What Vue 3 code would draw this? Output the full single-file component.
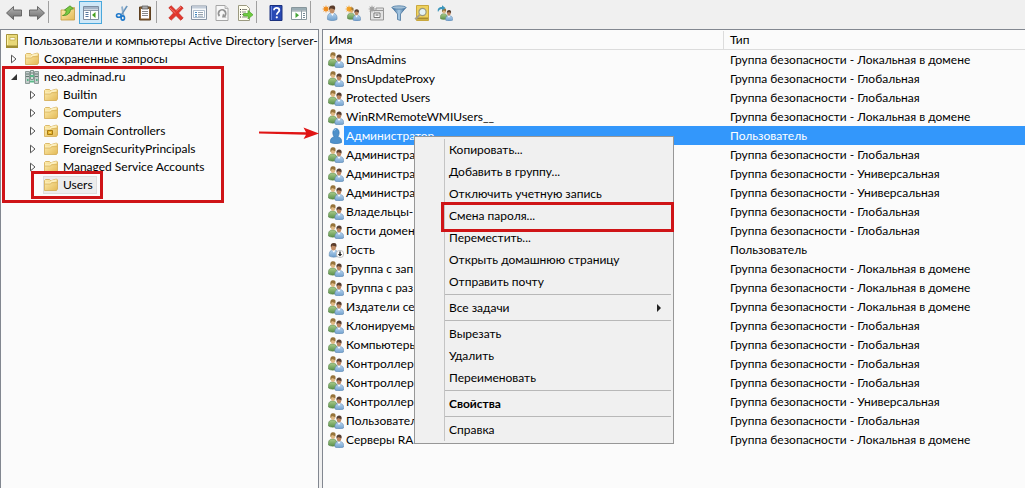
<script setup>
const toolbar = [
  [{ icon: 'back', label: 'Назад' }, { icon: 'forward', label: 'Вперед' }],
  [{ icon: 'up', label: 'Вверх' }, { icon: 'tree', label: 'Дерево консоли', active: true }],
  [{ icon: 'cut', label: 'Вырезать' }, { icon: 'paste', label: 'Вставить' }],
  [
    { icon: 'delete', label: 'Удалить' },
    { icon: 'props', label: 'Свойства' },
    { icon: 'refresh', label: 'Обновить' },
    { icon: 'export', label: 'Экспорт списка' }
  ],
  [{ icon: 'help', label: 'Справка' }, { icon: 'pane', label: 'Панель действий' }],
  [
    { icon: 'newuser', label: 'Создать пользователя' },
    { icon: 'newgroup', label: 'Создать группу' },
    { icon: 'newou', label: 'Создать подразделение' },
    { icon: 'filter', label: 'Фильтр' },
    { icon: 'find', label: 'Поиск' },
    { icon: 'addgroup', label: 'Добавить в группу' }
  ]
]

const tree = [
  { level: 0, icon: 'book', text: 'Пользователи и компьютеры Active Directory [server-' },
  { level: 1, icon: 'folder', text: 'Сохраненные запросы', arrow: 'closed' },
  { level: 1, icon: 'domain', text: 'neo.adminad.ru', arrow: 'open' },
  { level: 2, icon: 'folder', text: 'Builtin', arrow: 'closed' },
  { level: 2, icon: 'folder', text: 'Computers', arrow: 'closed' },
  { level: 2, icon: 'oufolder', text: 'Domain Controllers', arrow: 'closed' },
  { level: 2, icon: 'folder', text: 'ForeignSecurityPrincipals', arrow: 'closed' },
  { level: 2, icon: 'folder', text: 'Managed Service Accounts', arrow: 'closed' },
  { level: 2, icon: 'folder', text: 'Users', selected: true }
]

const L = 'Группа безопасности - Локальная в домене'
const G = 'Группа безопасности - Глобальная'
const U = 'Группа безопасности - Универсальная'
const P = 'Пользователь'
const rows = [
  { name: 'DnsAdmins', type: L },
  { name: 'DnsUpdateProxy', type: G },
  { name: 'Protected Users', type: G },
  { name: 'WinRMRemoteWMIUsers__', type: L },
  { name: 'Администратор', type: P, icon: 'user', selected: true },
  { name: 'Администра', type: G },
  { name: 'Администра', type: U },
  { name: 'Администра', type: U },
  { name: 'Владельцы-', type: G },
  { name: 'Гости домен', type: G },
  { name: 'Гость', type: P, icon: 'guest' },
  { name: 'Группа с зап', type: L },
  { name: 'Группа с раз', type: L },
  { name: 'Издатели сер', type: L },
  { name: 'Клонируемы', type: G },
  { name: 'Компьютеры', type: G },
  { name: 'Контроллер', type: G },
  { name: 'Контроллер', type: G },
  { name: 'Контроллер', type: U },
  { name: 'Пользовател', type: G },
  { name: 'Серверы RA', type: L }
]

const menu = [
  [
    { text: 'Копировать...' },
    { text: 'Добавить в группу...' },
    { text: 'Отключить учетную запись' },
    { text: 'Смена пароля...', marked: true },
    { text: 'Переместить...' },
    { text: 'Открыть домашнюю страницу' },
    { text: 'Отправить почту' }
  ],
  [{ text: 'Все задачи', submenu: true }],
  [{ text: 'Вырезать' }, { text: 'Удалить' }, { text: 'Переименовать' }],
  [{ text: 'Свойства', bold: true }],
  [{ text: 'Справка' }]
]
</script>

<template>
  <div class="window">
    <svg class="sprite" aria-hidden="true">
      <defs>
        <linearGradient id="g-arrow" x1="0" y1="0" x2="0" y2="1">
          <stop offset="0" stop-color="#b5b5b5" /><stop offset="1" stop-color="#6c6c6c" />
        </linearGradient>
        <linearGradient id="g-folder" x1="0" y1="0" x2="1" y2="1">
          <stop offset="0" stop-color="#fff0b4" /><stop offset="1" stop-color="#e3b955" />
        </linearGradient>
        <linearGradient id="g-blue" x1="0" y1="0" x2="0" y2="1">
          <stop offset="0" stop-color="#b5d3ee" /><stop offset="1" stop-color="#6f9fcd" />
        </linearGradient>
        <linearGradient id="g-green" x1="0" y1="0" x2="0" y2="1">
          <stop offset="0" stop-color="#a9cc8e" /><stop offset="1" stop-color="#5c9149" />
        </linearGradient>
        <linearGradient id="g-filter" x1="0" y1="0" x2="1" y2="0">
          <stop offset="0" stop-color="#2f5f8e" /><stop offset=".5" stop-color="#a9cbe6" /><stop offset="1" stop-color="#2e5d8b" />
        </linearGradient>
      </defs>
      <symbol id="back" viewBox="0 0 16 16">
        <path d="M.5 8 7.500 1.500V5h8v6h-8v3.500z" fill="url(#g-arrow)" stroke="#5f5f5f" stroke-width=".9" stroke-linejoin="round" />
      </symbol>
      <symbol id="forward" viewBox="0 0 16 16">
        <path d="M15.500 8 8.500 1.500V5h-8v6h8v3.500z" fill="url(#g-arrow)" stroke="#5f5f5f" stroke-width=".9" stroke-linejoin="round" />
      </symbol>
      <symbol id="folder" viewBox="0 0 16 16">
        <path d="M1.500 3.500 2.500 2.500h4l1 1h1l5-1.500 1 1v9l-1 1.500h-12z" fill="url(#g-folder)" stroke="#d3ab50" stroke-width=".8" />
        <path d="M8 3.500 13.500 2.300v2l-5 1.200-1 1.500H2V5.500h5z" fill="#fff6cf" opacity=".8" />
        <path d="M2 7h5.500l1-1.300H14" stroke="#d7b158" stroke-width=".8" fill="none" />
      </symbol>
      <symbol id="oufolder" viewBox="0 0 16 16">
        <use href="#folder" width="16" height="16" />
        <path d="M4.500 7.500h5v4h-5z" fill="#e8b42c" stroke="#a87a10" />
        <path d="M6 9h2v1H6z" fill="#f8dc7c" />
      </symbol>
      <symbol id="up" viewBox="0 0 16 16">
        <path d="M1 5h5l1-1.500 7.500-1V15H1z" fill="url(#g-folder)" stroke="#c59a3d" stroke-width=".8" />
        <path d="M2.500 10.500C6 9.500 6 7 6.200 5.500L4.500 5 10 .8 13.500 3.800 10.500 4.500C10.300 8 7.500 11 2.500 10.500z" fill="#79c842" stroke="#3f8a20" stroke-width=".7" />
      </symbol>
      <symbol id="tree" viewBox="0 0 16 16">
        <path d="M.5 1.500h15v13H.5z" fill="#fff" stroke="#7c8ca0" />
        <path d="M1 2h14v2.500H1z" fill="#a3b3c6" />
        <path d="M1 5.500h14M7.500 5v9" stroke="#8b99aa" />
        <path d="M2.500 7.500h3M2.500 9.500h3M2.500 11.500h3" stroke="#54779f" />
        <path d="M12.500 7v6L9 10z" fill="#45a01f" />
      </symbol>
      <symbol id="cut" viewBox="0 0 16 16">
        <path d="M13 1 7 10.500M8 1.500 9.500 11" stroke="#8fb0ce" stroke-width="1.800" fill="none" />
        <path d="M13.200 1 8 9" stroke="#4d80af" stroke-width=".8" />
        <ellipse cx="4.800" cy="10.500" rx="2.300" ry="1.800" fill="none" stroke="#1f79cb" stroke-width="1.600" />
        <ellipse cx="8.800" cy="13" rx="1.700" ry="2.100" fill="none" stroke="#1f79cb" stroke-width="1.600" />
      </symbol>
      <symbol id="paste" viewBox="0 0 16 16">
        <path d="M2.500 2h11v13h-11z" fill="#8a6030" stroke="#5e4020" />
        <path d="M4 4h8v9.500H4z" fill="#fff" />
        <path d="M5 1h6v3H5z" fill="#aaa" stroke="#555" stroke-width=".7" />
        <path d="M5 6.500h6M5 8.500h6M5 10.500h6" stroke="#8a8a8a" />
      </symbol>
      <symbol id="delete" viewBox="0 0 16 16">
        <path d="M.8 2.800 3.200.8 8 5.500 12.800.9 15.200 3 10.500 8l4.700 5-2.500 2.200L8 10.600l-4.700 4.500L.8 13 5.500 8z" fill="#e1372d" stroke="#c4281f" stroke-width=".7" />
        <path d="M2 3 7.500 8M13 2 8.500 6" stroke="#f58c80" stroke-width=".8" />
      </symbol>
      <symbol id="props" viewBox="0 0 16 16">
        <path d="M.5 1h15v13.500H.5z" fill="#f7f9fb" stroke="#8794a4" />
        <path d="M1 2.500h14" stroke="#c3cdd9" stroke-width="2" />
        <path d="M2.500 5.500h11v7h-11z" fill="#fff" stroke="#9aacc0" stroke-width=".8" />
        <path d="M4 7.500h2M4 9.500h2M4 11.200h2" stroke="#4588bd" />
        <path d="M7 7.500h5M7 9.500h5M7 11.200h5" stroke="#98a4b0" />
      </symbol>
      <symbol id="refresh" viewBox="0 0 16 16">
        <path d="M2 .5h9l3 3v12H2z" fill="#f7f7f7" stroke="#a6a6a6" />
        <path d="M11 .5v3h3" fill="#ddd" stroke="#a6a6a6" stroke-width=".8" />
        <path d="M5.500 11a3.600 3.600 0 1 1 5.300-.2" fill="none" stroke="#929292" stroke-width="1.800" />
        <path d="M9 8.500 12.500 12.500H8z" fill="#929292" />
      </symbol>
      <symbol id="export" viewBox="0 0 16 16">
        <path d="M1.500.5h8l3 3v12h-11z" fill="#fffef0" stroke="#9c9a81" />
        <path d="M3 4.500h1M3 7h1M3 9.500h1M3 12h1" stroke="#333" />
        <path d="M5 4.500h5M5 7h4M5 9.500h3M5 12h5" stroke="#8d8d83" />
        <path d="M6.500 8.500H11V5.500l5 4.300-5 4.200v-3H6.500z" fill="#70cb3f" stroke="#4ba52a" stroke-width=".7" />
      </symbol>
      <symbol id="help" viewBox="0 0 16 16">
        <path d="M2 .5h12v15H2z" fill="#2949b4" stroke="#1c327f" />
        <path d="M3.500 1v14" stroke="#6684df" />
        <path d="M6 5.200c0-3.200 5.300-3.100 5.300 0 0 2.200-2.500 2.200-2.500 4.500" fill="none" stroke="#fff" stroke-width="1.800" />
        <circle cx="8.800" cy="12.300" r="1.100" fill="#fff" />
      </symbol>
      <symbol id="pane" viewBox="0 0 16 16">
        <path d="M.5 2.500h15v12H.5z" fill="#fff" stroke="#87969c" />
        <path d="M1 3h14v2.500H1z" fill="#9badb4" />
        <path d="M10.500 5.500v9M1 6h14" stroke="#8c9ba2" />
        <path d="M12 8.500h2M12 10.500h2M12 12.500h2" stroke="#758a95" />
        <path d="M4.500 7.500v5.500L8 10.200z" fill="#45a536" />
      </symbol>
      <symbol id="person" viewBox="0 0 16 16">
        <path d="M3.500 14.500c-.5-5 1.500-6.500 4.500-6.500s5.500 1.500 5 6.500c-2.500 1.500-7 1.500-9.500 0z" fill="url(#g-blue)" stroke="#6289b2" stroke-width=".6" />
        <path d="M6.500 8h3.500l-1.500 3z" fill="#fff" />
        <ellipse cx="8" cy="5" rx="2.600" ry="3.400" fill="#c28e67" />
        <path d="M5.200 5C4.500 2 6 .5 8.500.6c2.600 0 3.200 2 2.400 4.400C10 3.500 7 4 6.700 3.300 6 4 6 5 5.200 5z" fill="#5a3c2b" />
      </symbol>
      <symbol id="group" viewBox="0 0 16 16">
        <path d="M.5 13c-.5-4 1-6 4-6s4.500 1.500 4.500 6c-2 1.500-6.500 1.500-8.500 0z" fill="url(#g-green)" stroke="#568248" stroke-width=".6" />
        <ellipse cx="5" cy="4" rx="2.200" ry="2.900" fill="#dfb883" />
        <path d="M2.500 5C2 1.500 3 .3 5.200.3S8 1.500 7.300 4.500C6 3 4.500 3.500 4 3c-.7.500-.7 2-1.500 2z" fill="#96743b" />
        <path d="M7 15c-.5-4 1-5.500 4-5.500 3.500 0 5 1.500 4.500 5.500-2 1.200-6.500 1.200-8.500 0z" fill="url(#g-blue)" stroke="#6289b2" stroke-width=".6" />
        <path d="M9.500 9.500h3L11 12z" fill="#fff" />
        <ellipse cx="11" cy="6.500" rx="2.200" ry="3" fill="#bd8661" />
        <path d="M8.500 6.500C8 3.500 9.500 2.500 11.200 2.500s3 1.300 2.300 4C12 5 10.500 5.500 10 5c-.7.500-.8 1.500-1.500 1.500z" fill="#563e30" />
      </symbol>
      <symbol id="star" viewBox="0 0 16 16">
        <path d="M8 0 9.500 4.500 13.700 2.300 11.500 6.500 16 8 11.500 9.500 13.700 13.700 9.500 11.500 8 16 6.500 11.500 2.300 13.700 4.500 9.500 0 8 4.500 6.500 2.300 2.300 6.500 4.500z" />
      </symbol>
      <symbol id="user" viewBox="0 0 16 16">
        <path d="M2.500 14.500C2 11 3.500 9.300 6.200 9 4 6 4.500.6 8 .6s4 5.400 1.800 8.400c2.700.3 4.200 2 3.700 5.500-3 1.500-8 1.500-11 0z" fill="#4f91ca" stroke="#3478b4" stroke-width=".7" />
        <path d="M6 3c0-1 1-1.500 2-1.500" stroke="#9fccef" fill="none" />
      </symbol>
      <symbol id="guest" viewBox="0 0 16 16">
        <use href="#person" width="15" height="16" x="-2" />
        <circle cx="12" cy="12" r="3.700" fill="#fff" stroke="#aaa" stroke-width=".7" />
        <path d="M11.300 9.500h1.400V12h1.500L12 14.500 9.800 12h1.500z" fill="#222" />
      </symbol>
      <symbol id="newuser" viewBox="0 0 16 16">
        <use href="#person" width="16" height="16" x="2" />
        <use href="#star" width="8" height="8" x="0" fill="#f08c1c" />
      </symbol>
      <symbol id="newgroup" viewBox="0 0 16 16">
        <use href="#group" width="14" height="14" x="2" y="2" />
        <use href="#star" width="8" height="8" x="0" fill="#f3a022" />
      </symbol>
      <symbol id="newou" viewBox="0 0 16 16">
        <path d="M2.500 5.500h13v9.500h-13zM8 3h7.500v2.500H8z" fill="#e2e2e2" stroke="#979797" />
        <path d="M6 8h6v4.500H6z" fill="#fff" stroke="#777" />
        <path d="M7.500 10h3" stroke="#555" />
        <use href="#star" width="8" height="8" x="0" fill="#a0a0a0" />
      </symbol>
      <symbol id="filter" viewBox="0 0 16 16">
        <path d="M1 2.500 6.500 9v5.500l3 1V9L15 2.500z" fill="url(#g-filter)" stroke="#3e6b96" stroke-width=".7" />
        <ellipse cx="8" cy="2.500" rx="7" ry="1.700" fill="#a2bfd6" stroke="#44749f" stroke-width=".7" />
      </symbol>
      <symbol id="find" viewBox="0 0 16 16">
        <path d="M2.500.5h12v15h-12z" fill="#efd15c" stroke="#c9a83e" />
        <path d="M3 13.500h11" stroke="#a98d2d" stroke-width="2" />
        <circle cx="8.500" cy="7" r="3.600" fill="#e4f2f5" stroke="#9a9a80" stroke-width="1.200" />
        <path d="m5.800 9.800-4.600 4.400" stroke="#a8a08a" stroke-width="2" />
      </symbol>
      <symbol id="addgroup" viewBox="0 0 16 16">
        <use href="#group" width="13" height="13" x="3" y="3" />
        <path d="M1 7C0 3.500 2 2 5 2V.3L8.500 3 5 5.500V4C3 4 2 5 1 7z" fill="#3c96bb" />
      </symbol>
      <symbol id="book" viewBox="0 0 16 16">
        <path d="M2.500 1.500h11v13h-11z" fill="#e8d878" stroke="#a7953d" />
        <path d="M6 4.500h5v2.500H6z" fill="#fffdf0" stroke="#b39c39" stroke-width=".6" />
        <path d="M2 12.500h12V15H2z" fill="#a08e34" />
        <path d="M3.500 2v10" stroke="#fff3a4" />
      </symbol>
      <symbol id="domain" viewBox="0 0 16 16">
        <path d="M6.500 1.500h3v9h-3z" fill="#d6dddb" stroke="#83938f" />
        <path d="M5 7h6M3 12.500h10" stroke="#5dba8a" stroke-width="2" />
        <path d="M1.500 2.500h4v12h-4zM10.500 2.500h4v12h-4z" fill="#c3cccb" stroke="#8c9a97" />
        <path d="M2 5h3M2 7.500h3M11 5h3M11 7.500h3M7 4h2" stroke="#667972" />
        <path d="M3 11h1.500M12 11h1.500" stroke="#2eac69" stroke-width="1.500" />
      </symbol>
    </svg>

    <header class="toolbar" role="toolbar" aria-label="Панель инструментов">
      <div v-for="(group, g) in toolbar" :key="g" class="tool-group" :class="{ divided: g > 0 && g !== 2 }">
        <button v-for="b in group" :key="b.icon" type="button" class="tool" :class="{ active: b.active }" :aria-label="b.label">
          <svg class="icon"><use :href="'#' + b.icon" /></svg>
        </button>
      </div>
    </header>

    <main class="panes">
      <nav class="tree-pane">
        <ul class="tree">
          <li v-for="n in tree" :key="n.text" class="node" :class="'level-' + n.level">
            <span v-if="n.level" class="twisty">
              <svg v-if="n.arrow" viewBox="0 0 8 10">
                <path v-if="n.arrow === 'closed'" d="M1.500 1.200 6 5 1.500 8.800z" fill="#fff" stroke="#555" />
                <path v-else d="M7 2v6H1z" fill="#333" />
              </svg>
            </span>
            <span class="leaf" :class="{ selected: n.selected }">
              <svg class="icon"><use :href="'#' + n.icon" /></svg>
              <span>{{ n.text }}</span>
            </span>
          </li>
        </ul>
      </nav>

      <section class="list-pane">
        <table class="list">
          <thead>
            <tr><th class="name-col">Имя</th><th>Тип</th></tr>
          </thead>
          <tbody>
            <tr v-for="(r, i) in rows" :key="i" :class="{ picked: r.selected }">
              <td>
                <div class="cell">
                  <svg class="icon"><use :href="'#' + (r.icon || 'group')" /></svg>
                  <span class="name">{{ r.name }}</span>
                </div>
              </td>
              <td class="type">{{ r.type }}</td>
            </tr>
          </tbody>
        </table>
      </section>
    </main>

    <div class="menu" role="menu">
      <div v-for="(section, s) in menu" :key="s" class="menu-section">
        <button v-for="m in section" :key="m.text" type="button" role="menuitem" class="menu-item" :class="{ bold: m.bold, marked: m.marked }">
          <span>{{ m.text }}</span>
          <svg v-if="m.submenu" class="more" viewBox="0 0 4 8"><path d="M0 0 4 4 0 8z" fill="#222" /></svg>
        </button>
      </div>
    </div>

    <div class="frame frame-domain"></div>
    <div class="frame frame-users"></div>
    <svg class="pointer" viewBox="0 0 62 14" aria-hidden="true">
      <path d="M1 5.500 48 6.200 45.500 1.500 61 7.500 45.500 13 48 8.700 1 7.500z" fill="#e01515" />
    </svg>
  </div>
</template>

<style>
body {
  margin: 0;
  background: #f0f0f0;
}
</style>

<style scoped>
.window {
  position: relative;
  display: flex;
  flex-direction: column;
  height: 100vh;
  overflow: hidden;
  background: #f0f0f0;
  color: #000;
  font: 12px/18px Lato, "Open Sans", sans-serif;
}
.sprite {
  position: absolute;
  width: 0;
  height: 0;
}
.icon {
  flex: none;
  display: block;
  width: 16px;
  height: 16px;
}
.toolbar {
  flex: none;
  display: flex;
  gap: 8px;
  height: 28px;
  padding: 1px 2px 0;
}
.tool-group {
  position: relative;
  display: flex;
}
.divided::before {
  content: "";
  position: absolute;
  left: -8px;
  top: 0;
  width: 1px;
  height: 22px;
  background: #a0a0a0;
}
.tool {
  display: flex;
  align-items: center;
  justify-content: center;
  width: 23px;
  height: 23px;
  padding: 0;
  border: 1px solid transparent;
  background: none;
}
.tool.active {
  border-color: #4aa8dc;
  background: #cfe8f8;
}
.panes {
  flex: 1;
  display: grid;
  grid-template-columns: 319px 1fr;
  column-gap: 3px;
  min-height: 0;
}
.tree-pane {
  overflow: hidden;
  border: 1px solid #828790;
  border-bottom: 0;
  background: #fbfbfb;
}
.tree {
  margin: 0;
  padding: 2px 0 0 3px;
  list-style: none;
}
.node {
  display: flex;
  height: 18px;
  white-space: nowrap;
}
.level-2 {
  padding-left: 19px;
}
.twisty {
  flex: none;
  display: flex;
  align-items: center;
  width: 20px;
  padding-left: 6px;
  box-sizing: border-box;
}
.twisty svg {
  width: 8px;
  height: 10px;
}
.leaf {
  display: flex;
  align-items: center;
  gap: 4px;
}
.leaf.selected {
  padding-right: 4px;
  background: #ececec;
  box-shadow: inset 0 0 0 1px #dedede;
}
.list-pane {
  overflow: hidden;
  border: 1px solid #828790;
  border-width: 1px 0 0 1px;
  background: #fbfbfb;
}
.list {
  width: 100%;
  table-layout: fixed;
  border-collapse: separate;
  border-spacing: 0;
  margin-top: 1px;
}
.list th {
  height: 18px;
  padding: 0 0 0 6px;
  border-bottom: 1px solid #dcdcdc;
  font-weight: 400;
  text-align: left;
}
.list .name-col {
  width: 394px;
  border-right: 1px solid #dcdcdc;
}
.list td {
  height: 19px;
  padding: 0;
  line-height: 19px;
  white-space: nowrap;
}
.list .type {
  padding-left: 6px;
}
.cell {
  display: flex;
  align-items: center;
  padding-left: 5px;
}
.name {
  flex: 1;
  padding-left: 2px;
}
.picked .name,
.picked .type {
  background: #3397fb;
  color: #fff;
}
.menu {
  position: absolute;
  left: 414px;
  top: 136px;
  width: 260px;
  box-sizing: border-box;
  padding: 2px;
  border: 1px solid #979797;
  background: linear-gradient(#c4c4c4, #c4c4c4) 29px 2px / 1px calc(100% - 4px) no-repeat #f0f0f0;
}
.menu-section + .menu-section {
  padding-top: 4px;
  background: linear-gradient(#b8b8b8, #b8b8b8) 28px 1px / calc(100% - 28px) 1px no-repeat;
}
.menu-item {
  position: relative;
  display: flex;
  align-items: center;
  justify-content: space-between;
  width: 100%;
  height: 22px;
  padding: 0 10px 0 32px;
  border: 0;
  background: none;
  color: inherit;
  font: inherit;
  text-align: left;
  white-space: nowrap;
}
.menu-item.bold {
  font-weight: 700;
}
.more {
  width: 4px;
  height: 8px;
}
.marked::after {
  content: "";
  position: absolute;
  inset: -3px -3px -5px 24px;
  border: 3px solid #cf1417;
}
.frame {
  position: absolute;
  box-sizing: border-box;
  border: 3px solid #cf1417;
}
.frame-domain {
  left: 2px;
  top: 66px;
  width: 222px;
  height: 137px;
}
.frame-users {
  left: 31px;
  top: 171px;
  width: 72px;
  height: 28px;
}
.pointer {
  position: absolute;
  left: 258px;
  top: 126px;
  width: 62px;
  height: 14px;
}
</style>
